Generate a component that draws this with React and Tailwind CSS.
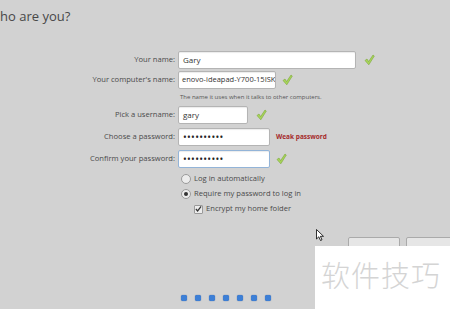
import React from "react";

const Check = () => (
  <svg width="11" height="12" viewBox="0 0 11 12" className="shrink-0">
    <path d="M1 6.5 L3 5 L4.6 7.6 L9 1 L10.3 2 L4.8 10.8 Z" fill="#a8d45a" stroke="#7aa838" strokeWidth="0.6" strokeLinejoin="round" />
  </svg>
);

const Input = ({ value, w, focus, pw }) => (
  <div
    className={`h-[18px] ${w} bg-white rounded-[2px] border ${focus ? "border-[#93b4d8]" : "border-[#b4b4b4]"} flex items-center pl-[4px] text-[8px] text-[#333] overflow-hidden whitespace-nowrap shadow-[inset_0_1px_1px_rgba(0,0,0,0.08)]`}
  >
    {pw ? <span className="text-[10px] tracking-[0.3px] text-[#222]">••••••••••</span> : value}
  </div>
);

const Row = ({ label, children }) => (
  <div className="flex items-center gap-[3px]">
    <div className="w-[175px] text-right text-[7.6px] text-[#4a4a4a] whitespace-nowrap">{label}</div>
    {children}
  </div>
);

export default function App() {
  return (
    <div
      className="relative w-[450px] h-[309px] overflow-hidden bg-[#d2d2d2]"
      style={{ fontFamily: '"Open Sans", "Noto Sans CJK SC", sans-serif' }}
    >
      <div className="pt-[6px] pl-0 text-[13px] leading-[20px] text-[#484848]">ho are you?</div>

      <div className="mt-[25px] flex flex-col">
        <Row label="Your name:">
          <Input value="Gary" w="w-[178px]" />
          <div className="ml-[5px]"><Check /></div>
        </Row>
        <div className="mt-[2px]">
          <Row label="Your computer's name:">
            <Input value={<span className="-ml-[1px] text-[7.5px]">enovo-ideapad-Y700-15ISK</span>} w="w-[98px]" />
            <div className="ml-[3px]"><Check /></div>
          </Row>
        </div>
        <div className="ml-[180px] mt-[3px] text-[6px] leading-[10px] text-[#555] whitespace-nowrap">
          The name it uses when it talks to other computers.
        </div>
        <div className="mt-[4px]">
          <Row label="Pick a username:">
            <Input value="gary" w="w-[70px]" />
            <div className="ml-[5px]"><Check /></div>
          </Row>
        </div>
        <div className="mt-[4px]">
          <Row label="Choose a password:">
            <Input pw w="w-[92px]" />
            <div className="ml-[3px] text-[6.5px] font-bold text-[#a52a2a] whitespace-nowrap">Weak password</div>
          </Row>
        </div>
        <div className="mt-[4px]">
          <Row label="Confirm your password:">
            <Input pw focus w="w-[92px]" />
            <div className="ml-[3px]"><Check /></div>
          </Row>
        </div>

        <div className="ml-[181px] mt-[5px] flex flex-col gap-[3px] text-[7.6px] text-[#4a4a4a]">
          <div className="flex items-center gap-[3px] h-[12px]">
            <div className="w-[10px] h-[10px] rounded-full border border-[#9a9a9a] bg-[#ececec]" />
            <span>Log in automatically</span>
          </div>
          <div className="flex items-center gap-[3px] h-[12px]">
            <div className="w-[10px] h-[10px] rounded-full border border-[#9a9a9a] bg-[#ececec] flex items-center justify-center">
              <div className="w-[4px] h-[4px] rounded-full bg-[#333]" />
            </div>
            <span>Require my password to log in</span>
          </div>
          <div className="ml-[13px] flex items-center gap-[3px] h-[12px]">
            <div className="w-[9px] h-[9px] rounded-[1px] border border-[#9a9a9a] bg-[#ececec] flex items-center justify-center">
              <svg width="8" height="8" viewBox="0 0 8 8">
                <path d="M1 4 L3 6.2 L7 1" fill="none" stroke="#333" strokeWidth="1.4" />
              </svg>
            </div>
            <span>Encrypt my home folder</span>
          </div>
        </div>
      </div>

      <div className="absolute left-[348px] top-[237px] w-[52px] h-[24px] rounded-[2px] border border-[#aaa] bg-[#e6e6e6]" />
      <div className="absolute left-[406px] top-[237px] w-[52px] h-[24px] rounded-[2px] border border-[#aaa] bg-[#e6e6e6]" />

      <div className="absolute left-[181px] top-[295px] flex gap-[8px]">
        {[0, 1, 2, 3, 4, 5, 6].map((i) => (
          <div key={i} className="w-[6px] h-[6px] rounded-[2px] bg-[#3d7fd6] shadow-[0_0_1px_#1f4f99]" />
        ))}
      </div>

      <svg className="absolute left-[316px] top-[229px]" width="9" height="13" viewBox="0 0 9 13">
        <path d="M0.5 0.5 L0.5 10 L2.8 7.8 L4.5 11.5 L6 10.8 L4.4 7.3 L7.5 7.3 Z" fill="#fff" stroke="#000" strokeWidth="0.8" strokeLinejoin="round" />
      </svg>

      <div className="absolute left-[315px] top-[246px] w-[135px] h-[63px] bg-white flex items-start pl-[6px] pt-[12px]">
        <span className="text-[29px] leading-[32px] font-light text-[#d4d4d4] tracking-[1px] whitespace-nowrap" style={{ fontFamily: '"Noto Sans CJK SC", sans-serif' }}>
          软件技巧
        </span>
      </div>
    </div>
  );
}
